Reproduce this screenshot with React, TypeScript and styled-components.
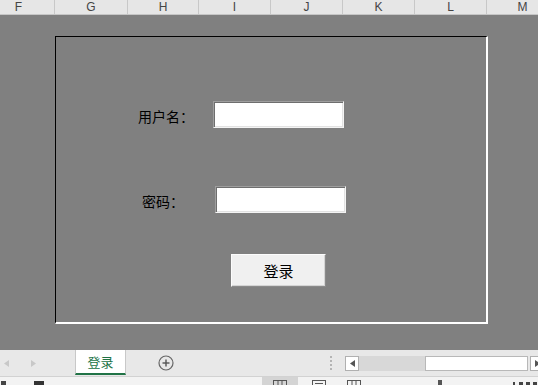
import React from "react";
import styled, { createGlobalStyle } from "styled-components";

const Global = createGlobalStyle`
  html, body { margin: 0; padding: 0; overflow: hidden; background: #ffffff; }
  * { box-sizing: border-box; }
`;

const Page = styled.div`
  width: 538px;
  height: 385px;
  display: flex;
  flex-direction: column;
  overflow: hidden;
  font-family: "Noto Sans CJK SC", "Noto Sans", sans-serif;
`;

const HeaderBar = styled.div`
  height: 15px;
  flex: none;
  display: flex;
  background: #e6e6e6;
  border-bottom: 1px solid #c6c6c6;
  overflow: hidden;
`;

const HeaderTrack = styled.div`
  display: flex;
  flex: none;
  margin-left: -17px;
`;

const ColHead = styled.div<{ $w: number }>`
  width: ${(p) => p.$w}px;
  flex: none;
  height: 14px;
  border-right: 1px solid #c8c8c8;
  text-align: center;
  font-family: "Liberation Sans", Arial, sans-serif;
  font-size: 12px;
  color: #444;
  line-height: 14px;
`;

const Sheet = styled.div`
  flex: 1;
  background: #808080;
  padding: 21px 0 0 55px;
`;

const Frame = styled.div`
  width: 433px;
  height: 288px;
  border-top: 1px solid #000;
  border-left: 1px solid #000;
  border-right: 2px solid #fff;
  border-bottom: 2px solid #fff;
  display: flex;
  flex-direction: column;
  padding-top: 64px;
`;

const Row = styled.div<{ $offset: number; $gap?: number }>`
  display: flex;
  align-items: center;
  padding-left: ${(p) => p.$offset}px;
  margin-top: ${(p) => p.$gap ?? 0}px;
`;

const Label = styled.div<{ $w: number }>`
  width: ${(p) => p.$w}px;
  flex: none;
  font-size: 14px;
  color: #000;
  padding-top: 2px;
`;

const Input = styled.div`
  width: 131px;
  height: 27px;
  flex: none;
  background: #fff;
  border-top: 1px solid #9e9e9e;
  border-left: 1px solid #9e9e9e;
  border-right: 1px solid #f4f4f4;
  border-bottom: 1px solid #f4f4f4;
  box-shadow: inset 1px 1px 0 #6e6e6e, inset -1px -1px 0 #e2e2e2;
`;

const Button = styled.div`
  width: 95px;
  height: 33px;
  flex: none;
  background: #f0f0f0;
  border-top: 1px solid #fcfcfc;
  border-left: 1px solid #fcfcfc;
  border-right: 1px solid #8a8a8a;
  border-bottom: 1px solid #8a8a8a;
  box-shadow: inset -1px -1px 0 #d4d4d4;
  display: flex;
  align-items: center;
  justify-content: center;
  font-size: 15px;
  color: #000;
`;

const TabBar = styled.div`
  height: 26px;
  flex: none;
  background: #e8e8e8;
  display: flex;
  align-items: stretch;
  overflow: hidden;
  & > * { flex: none; }
`;

const NavArrow = styled.div<{ $w: number }>`
  width: ${(p) => p.$w}px;
  display: flex;
  align-items: center;
  justify-content: center;
`;

const Tab = styled.div`
  width: 51px;
  margin-left: 21px;
  background: #fff;
  border-left: 1px solid #c8c8c8;
  border-right: 1px solid #c8c8c8;
  border-bottom: 2px solid #217346;
  display: flex;
  align-items: center;
  justify-content: center;
  color: #217346;
  font-size: 13px;
  height: 25px;
`;

const AddBtn = styled.div`
  margin-left: 32px;
  display: flex;
  align-items: center;
  padding-bottom: 1px;
`;

const Dots = styled.div`
  margin-left: 155px;
  width: 4px;
  display: flex;
  flex-direction: column;
  justify-content: center;
  gap: 2px;
  align-items: center;
  & > i {
    display: block;
    width: 2px;
    height: 2px;
    background: #b4b4b4;
  }
`;

const Scroll = styled.div`
  margin-left: 12px;
  display: flex;
  align-items: center;
  height: 100%;
  & > * { flex: none; }
`;

const ScrollBtn = styled.div`
  width: 14px;
  height: 15px;
  background: #fff;
  border: 1px solid #b0b0b0;
  display: flex;
  align-items: center;
  justify-content: center;
`;

const Track = styled.div`
  width: 66px;
  height: 15px;
  background: #d8d8d8;
`;

const Thumb = styled.div`
  width: 103px;
  height: 15px;
  margin-right: 2px;
  background: #fff;
  border: 1px solid #b8b8b8;
`;

const StatusBar = styled.div`
  height: 9px;
  flex: none;
  background: #f3f3f3;
  border-top: 1px solid #d2d2d2;
  display: flex;
  align-items: flex-start;
  overflow: hidden;
  & > * { flex: none; }
`;

const StatusSlot = styled.div<{ $x: number; $w: number; $active?: boolean }>`
  margin-left: ${(p) => p.$x}px;
  width: ${(p) => p.$w}px;
  height: 10px;
  display: flex;
  justify-content: center;
  padding-top: 3px;
  background: ${(p) => (p.$active ? "#d4d4d4" : "transparent")};
`;

const columns = [
  { l: "F", w: 72 },
  { l: "G", w: 73 },
  { l: "H", w: 71 },
  { l: "I", w: 72 },
  { l: "J", w: 72 },
  { l: "K", w: 72 },
  { l: "L", w: 72 },
  { l: "M", w: 72 },
];

const Tri = ({ dir, color }: { dir: "l" | "r"; color: string }) => (
  <svg width="5" height="7" viewBox="0 0 5 7">
    <polygon points={dir === "l" ? "5,0 0,3.5 5,7" : "0,0 5,3.5 0,7"} fill={color} />
  </svg>
);

const GridIcon = () => (
  <svg width="14" height="12" viewBox="0 0 14 12">
    <rect x="0.5" y="0.5" width="13" height="11" fill="none" stroke="#555" />
    <line x1="5" y1="0" x2="5" y2="12" stroke="#555" />
    <line x1="9" y1="0" x2="9" y2="12" stroke="#555" />
  </svg>
);

const PageIcon = () => (
  <svg width="14" height="12" viewBox="0 0 14 12">
    <rect x="0.5" y="0.5" width="13" height="11" fill="none" stroke="#555" />
    <line x1="3" y1="3.5" x2="11" y2="3.5" stroke="#555" />
  </svg>
);

export default function App() {
  return (
    <>
      <Global />
      <Page>
        <HeaderBar>
          <HeaderTrack>
            {columns.map((c) => (
              <ColHead key={c.l} $w={c.w}>
                {c.l}
              </ColHead>
            ))}
          </HeaderTrack>
        </HeaderBar>
        <Sheet>
          <Frame>
            <Row $offset={82}>
              <Label $w={75}>用户名：</Label>
              <Input />
            </Row>
            <Row $offset={86} $gap={58}>
              <Label $w={73}>密码：</Label>
              <Input />
            </Row>
            <Row $offset={175} $gap={41}>
              <Button>登录</Button>
            </Row>
          </Frame>
        </Sheet>
        <TabBar>
          <NavArrow $w={12}>
            <Tri dir="l" color="#c8c8c8" />
          </NavArrow>
          <NavArrow $w={42}>
            <Tri dir="r" color="#c8c8c8" />
          </NavArrow>
          <Tab>登录</Tab>
          <AddBtn>
            <svg width="16" height="16" viewBox="0 0 16 16">
              <circle cx="8" cy="8" r="7" fill="none" stroke="#666" strokeWidth="1.2" />
              <line x1="4.5" y1="8" x2="11.5" y2="8" stroke="#555" strokeWidth="1.4" />
              <line x1="8" y1="4.5" x2="8" y2="11.5" stroke="#555" strokeWidth="1.4" />
            </svg>
          </AddBtn>
          <Dots>
            <i />
            <i />
            <i />
            <i />
          </Dots>
          <Scroll>
            <ScrollBtn>
              <Tri dir="l" color="#555" />
            </ScrollBtn>
            <Track />
            <Thumb />
            <ScrollBtn>
              <Tri dir="r" color="#555" />
            </ScrollBtn>
          </Scroll>
        </TabBar>
        <StatusBar>
          <StatusSlot $x={0} $w={10}>
            <svg width="8" height="8" viewBox="0 0 8 8">
              <rect x="0" y="1" width="5" height="7" fill="#444" />
            </svg>
          </StatusSlot>
          <StatusSlot $x={18} $w={22}>
            <svg width="12" height="8" viewBox="0 0 12 8">
              <rect x="1" y="1" width="10" height="7" fill="#333" />
            </svg>
          </StatusSlot>
          <StatusSlot $x={212} $w={36} $active>
            <GridIcon />
          </StatusSlot>
          <StatusSlot $x={8} $w={26}>
            <PageIcon />
          </StatusSlot>
          <StatusSlot $x={9} $w={26}>
            <GridIcon />
          </StatusSlot>
          <StatusSlot $x={68} $w={10}>
            <svg width="4" height="8" viewBox="0 0 4 8">
              <rect x="0" y="0" width="4" height="8" fill="#555" />
            </svg>
          </StatusSlot>
          <StatusSlot $x={66} $w={30}>
            <svg width="30" height="8" viewBox="0 0 30 8">
              <rect x="2" y="2" width="2" height="6" fill="#444" />
              <rect x="8" y="2" width="4" height="6" fill="#444" />
              <rect x="15" y="2" width="4" height="6" fill="#444" />
              <rect x="22" y="2" width="4" height="6" fill="#444" />
            </svg>
          </StatusSlot>
        </StatusBar>
      </Page>
    </>
  );
}
